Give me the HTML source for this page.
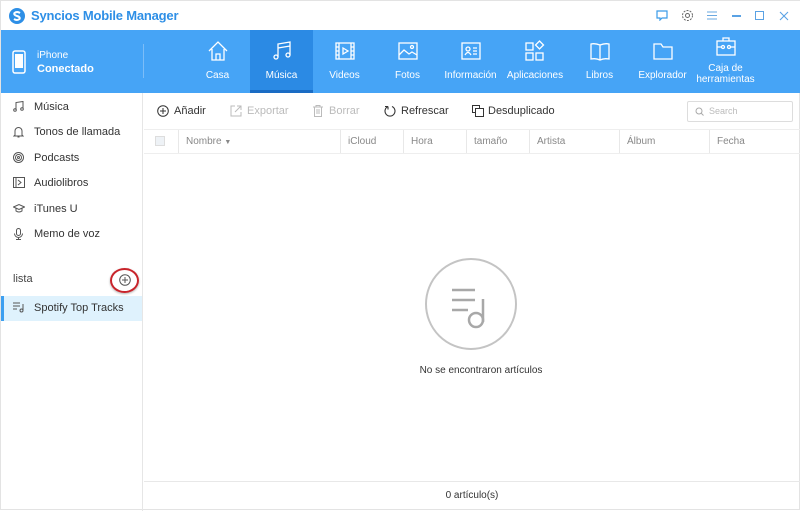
<!DOCTYPE html>
<html><head><meta charset="utf-8"><style>
*{margin:0;padding:0;box-sizing:border-box}
body{width:800px;height:510px;overflow:hidden;background:#fff;font-family:"Liberation Sans","DejaVu Sans",sans-serif;position:relative;border:1px solid #e3e3e3}
.abs{position:absolute}
.title{left:0;top:0;width:800px;height:29px;background:#fff}
.hdr{left:0;top:29px;width:800px;height:63px;background:#46a4f6}
.tab{position:absolute;top:0;height:63px;color:#fff;font-size:10px;text-align:center}
.tab svg{position:absolute;left:50%;margin-left:-11px;top:10px}
.tab span{position:absolute;left:0;right:0;top:40px;line-height:11px}
.side{left:0;top:92px;width:142px;height:418px;border-right:1px solid #e6e6e6}
.si{position:absolute;left:12px;font-size:11px;color:#333;height:14px;line-height:14px}
.si svg{position:absolute;left:0;top:1px}
.si span{position:absolute;left:21px;white-space:nowrap}
.tb{font-size:11px;color:#333;position:absolute;top:104px;line-height:13px}
.th{position:absolute;top:129px;height:23px;line-height:24px;font-size:10px;color:#888;border-left:1px solid #e8e8e8;padding-left:7px}
</style></head><body>
<div class="abs title">
 <svg class="abs" style="left:8px;top:7px" width="16" height="16" viewBox="0 0 16 16"><circle cx="8" cy="8" r="8" fill="#2e8fe6"/><path d="M11 5 Q8 3 5.5 5 Q4.5 7 8 8 Q11.5 9 10.5 11 Q8 13 5 11" stroke="#fff" stroke-width="2" fill="none"/></svg>
 <div class="abs" style="left:30px;top:7px;font-size:13px;color:#2e8fe6;font-weight:bold;letter-spacing:-0.2px">Syncios Mobile Manager</div>
 <svg class="abs" style="left:655px;top:9px" width="12" height="11"><path d="M1 1h10v7H6l-2 2V8H1z" fill="none" stroke="#3a9be8" stroke-width="1.2"/></svg>
 <svg class="abs" style="left:680px;top:8px" width="13" height="13" viewBox="0 0 13 13"><circle cx="6.5" cy="6.5" r="2" fill="none" stroke="#666"/><circle cx="6.5" cy="6.5" r="5" fill="none" stroke="#666" stroke-dasharray="2 1.2"/></svg>
 <svg class="abs" style="left:706px;top:10px" width="10" height="9"><path d="M0 1h10M0 4.5h10M0 8h10" stroke="#6aa8e0"/></svg>
 <div class="abs" style="left:731px;top:14px;width:9px;height:1.5px;background:#5aa2e4"></div>
 <div class="abs" style="left:754px;top:10px;width:9px;height:9px;border:1.2px solid #5aa2e4"></div>
 <svg class="abs" style="left:778px;top:10px" width="10" height="10"><path d="M1 1l8 8M9 1l-8 8" stroke="#5aa2e4" stroke-width="1.1"/></svg>
</div>
<div class="abs hdr">
 <svg class="abs" style="left:11px;top:20px" width="14" height="24"><rect x="1" y="1" width="12" height="22" rx="2" fill="none" stroke="#fff" stroke-width="1.5"/><rect x="3" y="4" width="8" height="14" fill="#fff"/></svg>
 <div class="abs" style="left:36px;top:20px;color:#fff;font-size:10px">iPhone</div>
 <div class="abs" style="left:36px;top:33px;color:#fff;font-size:11px;font-weight:bold">Conectado</div>
 <div class="abs" style="left:142px;top:14px;width:1px;height:34px;background:#7cbdf8"></div>
 <div class="tab" style="left:185px;width:63px"><svg width="22" height="22" viewBox="0 0 22 22" fill="none" stroke="#fff" stroke-width="1.3"><path d="M2 11L11 2l9 9M5 9v11h12V9M9 20v-6h4v6"/></svg><span>Casa</span></div>
 <div class="tab" style="left:249px;width:63px;background:#2b8ae4;border-bottom:3px solid #1a6cc4"><svg width="22" height="22" viewBox="0 0 22 22" fill="none" stroke="#fff" stroke-width="1.3"><path d="M7 17V4l12-2v13M7 8l12-2"/><circle cx="5" cy="17" r="2"/><circle cx="17" cy="15" r="2"/></svg><span>Música</span></div>
 <div class="tab" style="left:312px;width:63px"><svg width="22" height="22" viewBox="0 0 22 22" fill="none" stroke="#fff" stroke-width="1.3"><rect x="2" y="3" width="18" height="16"/><path d="M5 3v16M17 3v16M2 7h3M2 11h3M2 15h3M17 7h3M17 11h3M17 15h3M9 8l5 3-5 3z"/></svg><span>Videos</span></div>
 <div class="tab" style="left:375px;width:63px"><svg width="22" height="22" viewBox="0 0 22 22" fill="none" stroke="#fff" stroke-width="1.3"><rect x="2" y="3" width="18" height="16"/><path d="M2 15l5-5 5 4 3-2 5 3"/><circle cx="15" cy="7" r="1.5"/></svg><span>Fotos</span></div>
 <div class="tab" style="left:438px;width:63px"><svg width="22" height="22" viewBox="0 0 22 22" fill="none" stroke="#fff" stroke-width="1.3"><rect x="2" y="3" width="18" height="16"/><circle cx="8" cy="9" r="2"/><path d="M5 15q3-5 6 0M13 8h4M13 11h4M13 14h4"/></svg><span>Información</span></div>
 <div class="tab" style="left:501px;width:66px"><svg width="22" height="22" viewBox="0 0 22 22" fill="none" stroke="#fff" stroke-width="1.3"><rect x="2" y="3" width="7" height="7"/><rect x="2" y="13" width="7" height="7"/><rect x="12" y="13" width="7" height="7"/><path d="M15.5 1l4 4-4 4-4-4z"/></svg><span>Aplicaciones</span></div>
 <div class="tab" style="left:567px;width:63px"><svg width="22" height="22" viewBox="0 0 22 22" fill="none" stroke="#fff" stroke-width="1.3"><path d="M11 5v15M11 5Q6 3 2 4v15q5-1 9 1q4-2 9-1V4q-4-1-9 1"/></svg><span>Libros</span></div>
 <div class="tab" style="left:630px;width:63px"><svg width="22" height="22" viewBox="0 0 22 22" fill="none" stroke="#fff" stroke-width="1.3"><path d="M2 4h7l2 3h9v12H2z"/></svg><span>Explorador</span></div>
 <div class="tab" style="left:693px;width:63px"><svg width="22" height="22" viewBox="0 0 22 22" fill="none" stroke="#fff" stroke-width="1.3" style="top:6px"><path d="M8 5V2h6v3"/><rect x="2" y="5" width="18" height="14"/><path d="M2 11h4M16 11h4"/><circle cx="8" cy="11" r="1.5"/><circle cx="14" cy="11" r="1.5"/></svg><span style="top:33px">Caja de<br>herramientas</span></div>
</div>
<div class="abs side">
 <div class="si" style="top:7px"><svg width="11" height="11" viewBox="0 0 11 11" fill="none" stroke="#555"><path d="M3 9V1.5l7-1v7"/><circle cx="2" cy="9" r="1.3"/><circle cx="9" cy="8" r="1.3"/></svg><span>Música</span></div>
 <div class="si" style="top:32px"><svg width="11" height="12" viewBox="0 0 11 12" fill="none" stroke="#555"><path d="M2 9V5a3.5 3.5 0 017 0v4l1 1H1zM4.5 11h2"/></svg><span>Tonos de llamada</span></div>
 <div class="si" style="top:58px"><svg width="11" height="11" viewBox="0 0 11 11" fill="none" stroke="#555"><circle cx="5.5" cy="5.5" r="5"/><circle cx="5.5" cy="5.5" r="3"/><circle cx="5.5" cy="5.5" r="1"/></svg><span>Podcasts</span></div>
 <div class="si" style="top:83px"><svg width="12" height="11" viewBox="0 0 12 11" fill="none" stroke="#555"><rect x="0.5" y="0.5" width="11" height="10"/><path d="M3 1v9M5 3l3 2.5L5 8"/></svg><span>Audiolibros</span></div>
 <div class="si" style="top:109px"><svg width="12" height="11" viewBox="0 0 12 11" fill="none" stroke="#555"><path d="M0.5 4L6 1.5 11.5 4 6 6.5zM3 5v3q3 2 6 0V5"/></svg><span>iTunes U</span></div>
 <div class="si" style="top:134px"><svg width="11" height="12" viewBox="0 0 11 12" fill="none" stroke="#555"><rect x="3.5" y="0.5" width="4" height="7" rx="2"/><path d="M1.5 5.5a4 4 0 008 0M5.5 9.5v2M3 11.5h5"/></svg><span>Memo de voz</span></div>
 <div class="abs" style="left:12px;top:180px;font-size:11px;color:#444">lista</div>
 <div class="abs" style="left:109px;top:175px;width:29px;height:25px;border:2px solid #c8242b;border-radius:50%;box-shadow:0 1px 2px rgba(0,0,0,.3)"></div>
 <svg class="abs" style="left:118px;top:181px" width="12" height="12" viewBox="0 0 12 12" fill="none" stroke="#555"><circle cx="6" cy="6" r="5.3"/><path d="M6 3v6M3 6h6"/></svg>
 <div class="abs" style="left:0;top:203px;width:141px;height:25px;background:#dff2fd;border-left:3px solid #3d9ff0"></div>
 <div class="si" style="top:208px"><svg width="12" height="11" viewBox="0 0 12 11" fill="none" stroke="#555"><path d="M0 1h7M0 4h7M0 7h4M10 2v6"/><circle cx="8.5" cy="8.5" r="1.5"/></svg><span>Spotify Top Tracks</span></div>
</div>
<svg class="abs" style="left:156px;top:104px" width="12" height="12" viewBox="0 0 12 12" fill="none" stroke="#333"><circle cx="6" cy="6" r="5.3"/><path d="M6 3v6M3 6h6"/></svg>
<div class="tb" style="left:173px">Añadir</div>
<svg class="abs" style="left:229px;top:104px" width="12" height="12" viewBox="0 0 12 12" fill="none" stroke="#bbb"><path d="M5 1H1v10h10V7M7 1h4v4M11 1L5 7"/></svg>
<div class="tb" style="left:246px;color:#bbb">Exportar</div>
<svg class="abs" style="left:312px;top:104px" width="10" height="12" viewBox="0 0 10 12" fill="none" stroke="#bbb"><path d="M0 2h10M3 2V0.5h4V2M1.5 2v9.5h7V2M4 4v5M6 4v5"/></svg>
<div class="tb" style="left:328px;color:#bbb">Borrar</div>
<svg class="abs" style="left:383px;top:104px" width="12" height="12" viewBox="0 0 12 12" fill="none" stroke="#333" stroke-width="1.1"><path d="M4 1.5A5 5 0 1 0 8 1.5M4 1.5v3M4 1.5H1"/></svg>
<div class="tb" style="left:400px">Refrescar</div>
<svg class="abs" style="left:471px;top:104px" width="12" height="12" viewBox="0 0 12 12" fill="none" stroke="#333"><rect x="0.5" y="0.5" width="7" height="7"/><rect x="3.5" y="3.5" width="8" height="8" fill="#fff"/></svg>
<div class="tb" style="left:487px">Desduplicado</div>
<div class="abs" style="left:686px;top:100px;width:106px;height:21px;border:1px solid #ddd;border-radius:2px"></div>
<svg class="abs" style="left:694px;top:106px" width="9" height="9" fill="none" stroke="#aaa"><circle cx="4" cy="4" r="3"/><path d="M6 6l2.5 2.5"/></svg>
<div class="abs" style="left:708px;top:105px;font-size:9px;color:#bbb">Search</div>
<div class="abs" style="left:143px;top:128px;width:656px;height:1px;background:#eee"></div>
<div class="abs" style="left:143px;top:152px;width:656px;height:1px;background:#eee"></div>
<div class="abs" style="left:154px;top:135px;width:10px;height:10px;border:1px solid #ddd;background:#eef2f6"></div>
<div class="th" style="left:177px">Nombre <span style="font-size:7px">▼</span></div>
<div class="th" style="left:339px">iCloud</div>
<div class="th" style="left:402px">Hora</div>
<div class="th" style="left:465px">tamaño</div>
<div class="th" style="left:528px">Artista</div>
<div class="th" style="left:618px">Álbum</div>
<div class="th" style="left:708px">Fecha</div>
<svg class="abs" style="left:423px;top:256px" width="94" height="94" viewBox="0 0 94 94" fill="none"><circle cx="47" cy="47" r="45" stroke="#c4c4c4" stroke-width="2"/><path d="M28 33h23M28 43h23M28 53h16M59 42v23" stroke="#a8a8a8" stroke-width="2.5"/><circle cx="52" cy="63" r="7" stroke="#a8a8a8" stroke-width="2.5"/></svg>
<div class="abs" style="left:380px;top:364px;width:200px;text-align:center;font-size:10px;color:#333">No se encontraron artículos</div>
<div class="abs" style="left:143px;top:480px;width:656px;height:1px;background:#e8e8e8"></div>
<div class="abs" style="left:143px;top:489px;width:656px;text-align:center;font-size:10px;color:#333">0 artículo(s)</div>
</body></html>
